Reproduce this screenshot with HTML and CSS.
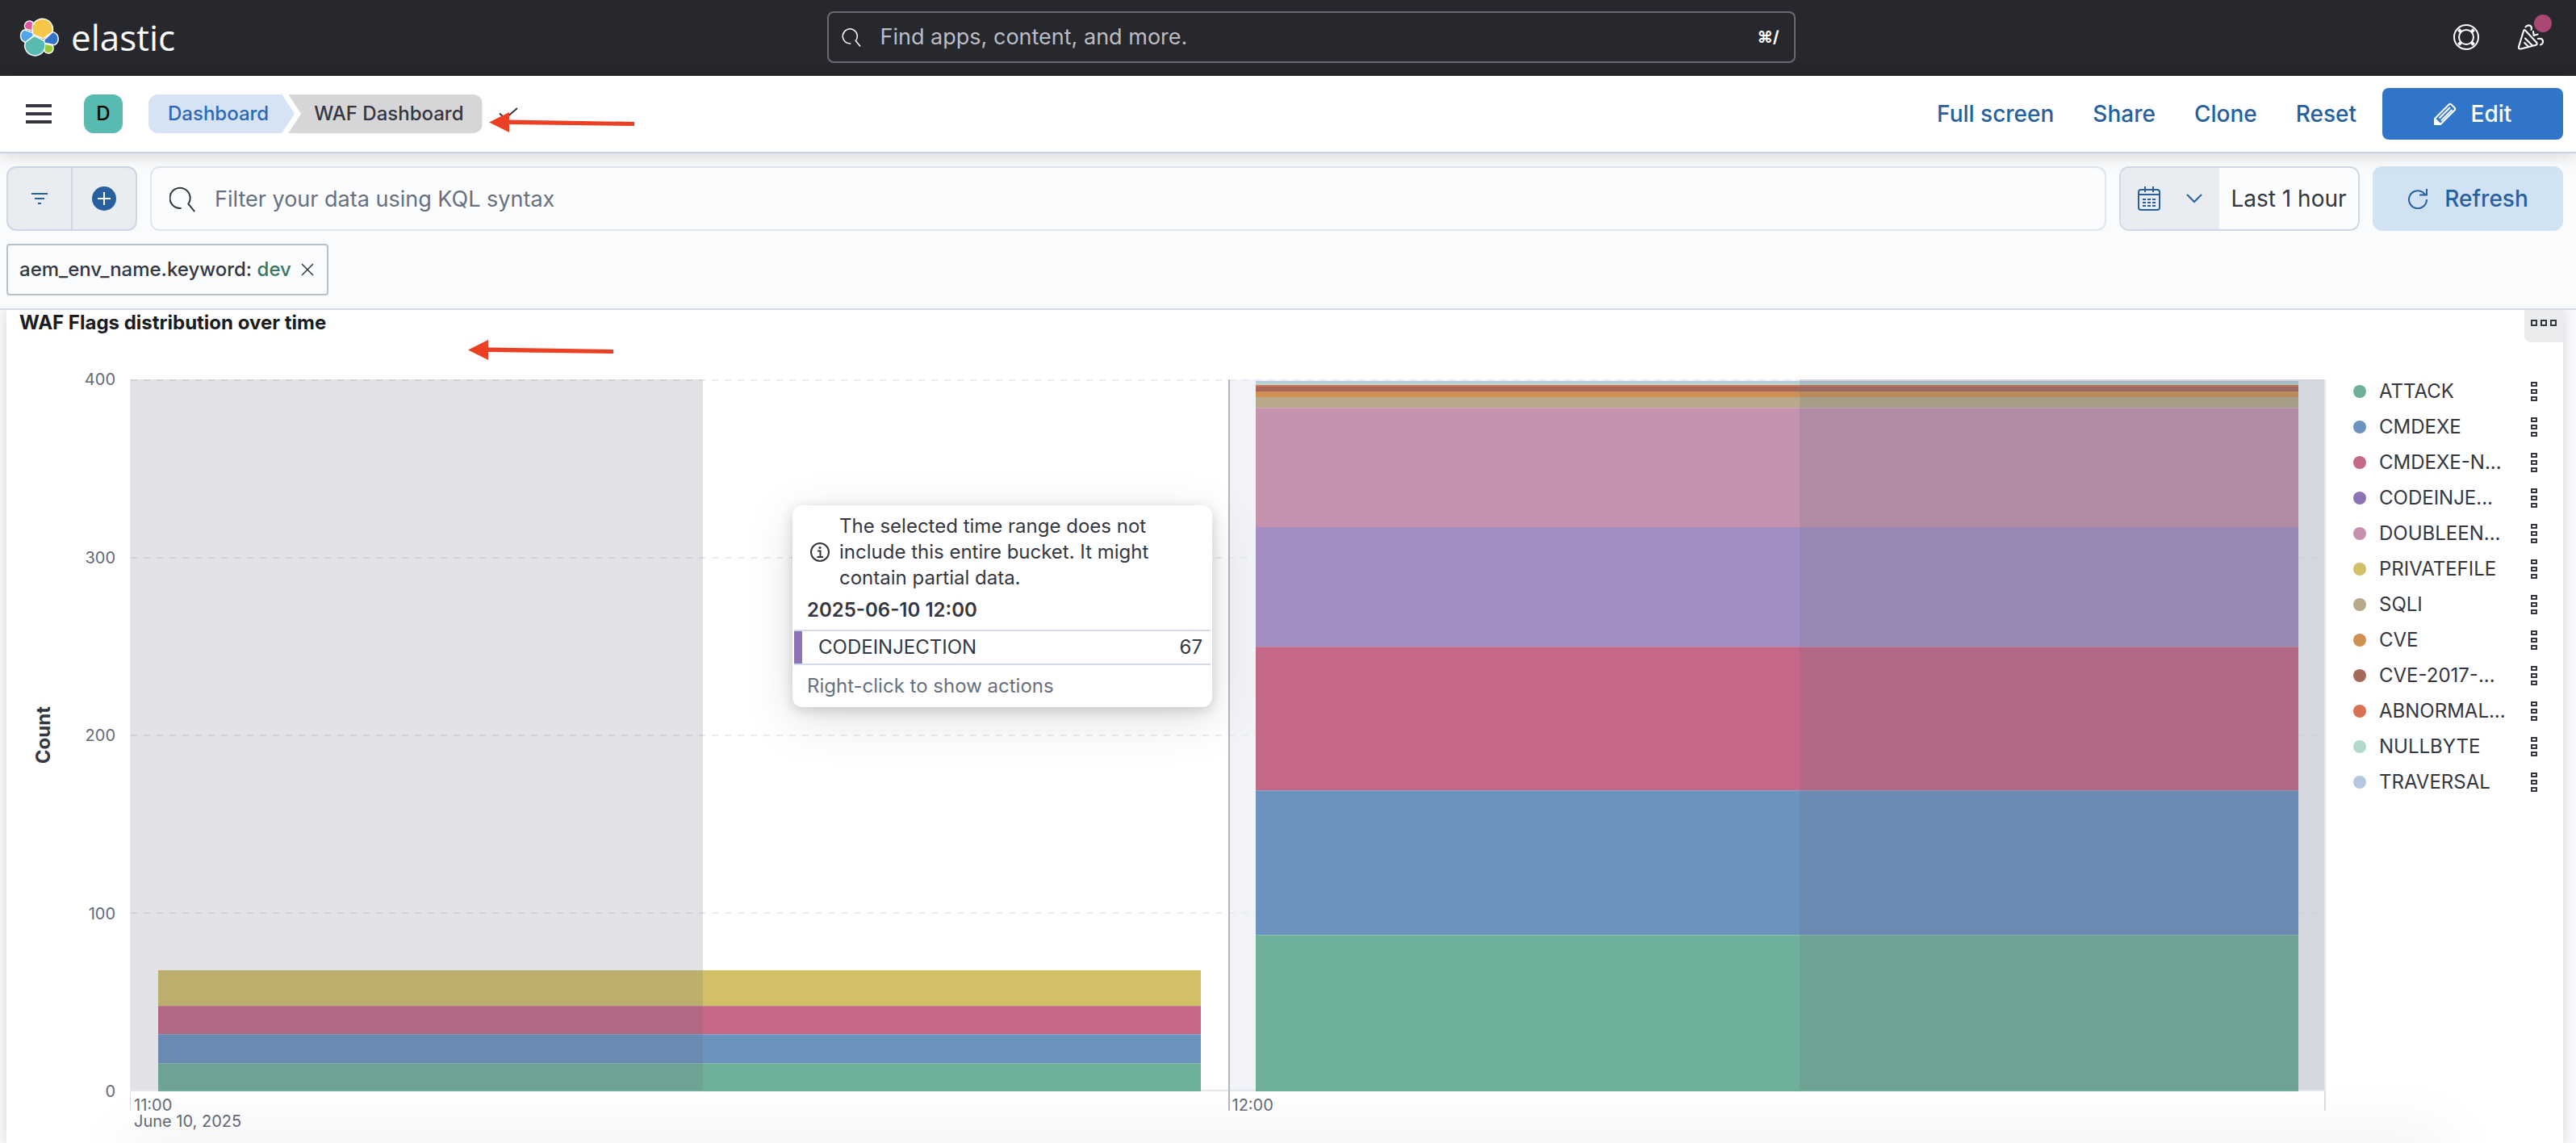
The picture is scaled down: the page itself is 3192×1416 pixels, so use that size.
FILE: index.html
```html
<!DOCTYPE html>
<html lang="en">
<head>
<meta charset="utf-8">
<title>WAF Dashboard - Elastic</title>
<link rel="stylesheet" href="styles.css">
</head>
<body>
<header class="topbar">
  <a class="brand" href="#">
    <svg class="brand-mark" viewBox="0 0 144 144" aria-hidden="true">
      <g stroke="#fff" stroke-width="9" stroke-linejoin="round">
        <path fill="#f5c748" d="M52 60 50 34A36 36 0 1 1 121 52L88 75Z"/>
        <path fill="#59bab2" d="M56 70 91 87 94 102A36 36 0 1 1 22 103L24 92Z"/>
        <path fill="#4fa6ee" d="M19 47 48 57 50 66 22 89A23 23 0 0 1 19 47Z"/>
        <path fill="#e0579c" d="M48 18 46 45 25 40A16 16 0 0 1 48 18Z"/>
        <path fill="#3275c7" d="M125 55 94 83 96 92 130 99A24 24 0 0 0 125 55Z"/>
        <path fill="#98c93d" d="M97 99 121 104A16 16 0 0 1 95 123Z"/>
      </g>
      <path fill="#f5c748" d="M52 60 50 34A36 36 0 1 1 121 52L88 75Z"/>
      <path fill="#59bab2" d="M56 70 91 87 94 102A36 36 0 1 1 22 103L24 92Z"/>
      <path fill="#4fa6ee" d="M19 47 48 57 50 66 22 89A23 23 0 0 1 19 47Z"/>
      <path fill="#e0579c" d="M48 18 46 45 25 40A16 16 0 0 1 48 18Z"/>
      <path fill="#3275c7" d="M125 55 94 83 96 92 130 99A24 24 0 0 0 125 55Z"/>
      <path fill="#98c93d" d="M97 99 121 104A16 16 0 0 1 95 123Z"/>
    </svg>
    <span class="brand-name">elastic</span>
  </a>
  <div class="site-search">
    <svg class="icon icon-sm" viewBox="0 0 16 16" aria-hidden="true"><path d="M6.500 13.200a6 6 0 1 1 5-2.200L15.400 15.600M6.500 13.300h1"/></svg>
    <input class="site-search-input" type="search" placeholder="Find apps, content, and more." aria-label="Find apps, content, and more">
    <kbd class="shortcut">⌘/</kbd>
  </div>
  <div class="topbar-actions">
    <button class="icon-btn" type="button" aria-label="Help">
      <svg class="icon" viewBox="0 0 32 32" aria-hidden="true"><g stroke-width="2"><circle cx="16" cy="16" r="15"/><circle cx="16" cy="16" r="9"/></g><g stroke-width="4"><path d="M6.500 6.500 9.500 9.500M25.500 6.500 22.500 9.500M6.500 25.500 9.500 22.500M25.500 25.500 22.500 22.500"/></g></svg>
    </button>
    <button class="icon-btn" type="button" aria-label="What's new">
      <svg class="icon" viewBox="0 0 32 32" aria-hidden="true"><g stroke-width="2.100" stroke-linejoin="round" stroke-linecap="round"><path d="M9 7.500 23 22.500Q25 25 21.500 26L4 30.500Q.5 31 1 28L7 8.500Q7.500 6.500 9 7.500ZM8.200 23l4.500 4.500M9 17.500l8.500 8.500M9.500 3.500Q11 1 14.500 1.500 18 3 16.500 7M19 9l.5 3.500M19.500 14l5-1.500M25 18q5-1 6 2.500.5 4-3 5"/></g></svg>
      <span class="news-dot"></span>
    </button>
  </div>
</header>

<nav class="navbar" aria-label="Dashboard">
  <button class="menu-btn" type="button" aria-label="Toggle primary navigation"><span></span><span></span><span></span></button>
  <button class="space-btn" type="button">D</button>
  <div class="crumbs">
    <a class="crumb crumb-first" href="#">Dashboard</a>
    <a class="crumb crumb-last" href="#" aria-current="page">WAF Dashboard</a>
    <svg class="crumb-check" viewBox="0 0 24 16" aria-hidden="true"><path d="M1 7.500 8 14 23 1"/></svg>
    <svg class="arrow arrow-crumb" viewBox="0 0 180 26" aria-hidden="true"><path d="M0 12.500 25 0V9.500L180 12V17L25 15V25Z"/></svg>
  </div>
  <div class="nav-actions">
    <a class="nav-link" href="#">Full screen</a>
    <a class="nav-link" href="#">Share</a>
    <a class="nav-link" href="#">Clone</a>
    <a class="nav-link" href="#">Reset</a>
    <button class="edit-btn" type="button">
      <svg class="icon icon-md" viewBox="0 0 28 28" aria-hidden="true"><path stroke-width="2" stroke-linejoin="round" d="M1 20 18.500 2.500Q20 1 21.500 2.500L25.500 6.500Q27 8 25.500 9.500L8 27H1ZM6.500 19.500 20 6M9 22.500 22.500 9M1 20l7 7"/><path fill="#fff" d="M1 21v6h6Z"/></svg>
      Edit
    </button>
  </div>
</nav>

<main class="page">
  <section class="querybar" aria-label="Query">
    <div class="query-row">
      <div class="filter-btns">
        <button type="button" aria-label="Saved queries"><svg class="icon icon-xs" viewBox="0 0 20 16" aria-hidden="true"><path stroke-width="2" d="M0 2H20M4 8H16M8 14H12"/></svg></button>
        <button type="button" aria-label="Add filter"><svg class="icon icon-add" viewBox="0 0 30 30" aria-hidden="true"><circle cx="15" cy="15" r="15" fill="#285f9f" stroke="none"/><path stroke="#fff" stroke-width="2" d="M15 7V23M7 15H23"/></svg></button>
      </div>
      <div class="kql">
        <svg class="icon" viewBox="0 0 16 16" aria-hidden="true"><path d="M6.500 13.500a6.300 6.300 0 1 1 5.200-2.700L15.600 15.600M6.500 13.500h.8"/></svg>
        <input class="kql-input" type="text" placeholder="Filter your data using KQL syntax" aria-label="Filter your data using KQL syntax">
      </div>
      <div class="dates">
        <button class="date-quick" type="button" aria-label="Date quick select">
          <svg class="icon icon-md" viewBox="0 0 28 30" aria-hidden="true"><g stroke-width="2"><rect x="1" y="4" width="26" height="25" rx="3"/><path d="M1 10H27M9 0V7M19 0V7"/><path stroke-dasharray="4 2" d="M6 16H22M6 20H22M6 24H22"/></g></svg>
          <svg class="icon icon-xs" viewBox="0 0 20 12" aria-hidden="true"><path stroke-width="2" d="M1 1 10 10 19 1"/></svg>
        </button>
        <button class="date-range" type="button">Last 1 hour</button>
      </div>
      <button class="refresh-btn" type="button">
        <svg class="icon icon-refresh" viewBox="0 0 26 26" aria-hidden="true"><path stroke-width="2" d="M24 14A11 11 0 1 1 19 5L22 8M24 1V8.500H15"/></svg>
        Refresh
      </button>
    </div>
    <div class="filter-row">
      <div class="filter-pill">
        <span>aem_env_name.keyword: <span class="filter-value">dev</span></span>
        <button class="filter-remove" type="button" aria-label="Remove filter"><svg class="icon icon-close" viewBox="0 0 16 16" aria-hidden="true"><path stroke-width="1.500" d="M1 1 15 15M15 1 1 15"/></svg></button>
      </div>
    </div>
  </section>

  <section class="panel" aria-labelledby="panel-title">
    <div class="panel-head">
      <h2 id="panel-title" class="panel-title">WAF Flags distribution over time</h2>
      <button class="panel-menu" type="button" aria-label="Panel options"><span></span><span></span><span></span></button>
      <svg class="arrow arrow-panel" viewBox="0 0 180 26" aria-hidden="true"><path d="M0 12.500 25 0V9.500L180 12V17L25 15V25Z"/></svg>
    </div>
    <div class="chart">
      <div class="y-title"><span>Count</span></div>
      <div class="y-axis"><span>400</span><span>300</span><span>200</span><span>100</span><span>0</span></div>
      <div class="plot">
        <div class="grid"><i></i><i></i><i></i><i></i></div>
        <div class="bucket">
          <i style="flex-grow:332"></i>
          <i class="c-private" style="flex-grow:20"></i>
          <i class="c-cmdn seam" style="flex-grow:16"></i>
          <i class="c-cmd seam" style="flex-grow:16"></i>
          <i class="c-attack seam" style="flex-grow:16"></i>
        </div>
        <div class="bucket bucket-active">
          <i style="flex-grow:1"></i>
          <i class="c-traversal" style="flex-grow:1"></i>
          <i class="c-null" style="flex-grow:1"></i>
          <i class="c-abnormal" style="flex-grow:1"></i>
          <i class="c-cve17" style="flex-grow:3"></i>
          <i class="c-cve" style="flex-grow:3"></i>
          <i class="c-sqli" style="flex-grow:6"></i>
          <i class="c-double seam" style="flex-grow:67"></i>
          <i class="c-code-dim" style="flex-grow:67"></i>
          <i class="c-cmdn seam" style="flex-grow:81"></i>
          <i class="c-cmd seam" style="flex-grow:81"></i>
          <i class="c-attack seam" style="flex-grow:88"></i>
        </div>
        <div class="partial partial-start"></div>
        <div class="partial partial-end"></div>
        <div class="tooltip" role="tooltip">
          <div class="tip-note">
            <svg class="icon icon-sm" viewBox="0 0 24 24" aria-hidden="true"><g stroke-width="2"><circle cx="12" cy="12" r="11"/><path d="M9 10.500H12.500V17.500M8.500 18H16"/></g><circle cx="12" cy="6.500" r="1.600" fill="#343741" stroke="none"/></svg>
            <p>The selected time range does not include this entire bucket. It might contain partial data.</p>
          </div>
          <div class="tip-date">2025-06-10 12:00</div>
          <div class="tip-row"><span>CODEINJECTION</span><span>67</span></div>
          <div class="tip-hint">Right-click to show actions</div>
        </div>
      </div>
      <ul class="legend">
        <li><i class="c-attack"></i><span>ATTACK</span><button type="button" aria-label="ATTACK options"><b></b><b></b><b></b></button></li>
        <li><i class="c-cmd"></i><span>CMDEXE</span><button type="button" aria-label="CMDEXE options"><b></b><b></b><b></b></button></li>
        <li><i class="c-cmdn"></i><span>CMDEXE-N...</span><button type="button" aria-label="CMDEXE-N options"><b></b><b></b><b></b></button></li>
        <li><i class="c-code"></i><span>CODEINJE...</span><button type="button" aria-label="CODEINJECTION options"><b></b><b></b><b></b></button></li>
        <li><i class="c-double"></i><span>DOUBLEEN...</span><button type="button" aria-label="DOUBLEEN options"><b></b><b></b><b></b></button></li>
        <li><i class="c-private"></i><span>PRIVATEFILE</span><button type="button" aria-label="PRIVATEFILE options"><b></b><b></b><b></b></button></li>
        <li><i class="c-sqli"></i><span>SQLI</span><button type="button" aria-label="SQLI options"><b></b><b></b><b></b></button></li>
        <li><i class="c-cve"></i><span>CVE</span><button type="button" aria-label="CVE options"><b></b><b></b><b></b></button></li>
        <li><i class="c-cve17"></i><span>CVE-2017-...</span><button type="button" aria-label="CVE-2017 options"><b></b><b></b><b></b></button></li>
        <li><i class="c-abnormal"></i><span>ABNORMAL...</span><button type="button" aria-label="ABNORMAL options"><b></b><b></b><b></b></button></li>
        <li><i class="c-null"></i><span>NULLBYTE</span><button type="button" aria-label="NULLBYTE options"><b></b><b></b><b></b></button></li>
        <li><i class="c-traversal"></i><span>TRAVERSAL</span><button type="button" aria-label="TRAVERSAL options"><b></b><b></b><b></b></button></li>
      </ul>
      <div class="x-axis">
        <div class="x-tick">11:00<br>June 10, 2025</div>
        <div class="x-tick x-tick-active">12:00</div>
      </div>
    </div>
  </section>
</main>
<div class="page-fade"></div>
</body>
</html>
```
FILE: styles.css
```css
* { box-sizing: border-box; }

body {
  margin: 0;
  min-height: 100vh;
  display: flex;
  flex-direction: column;
  position: relative;
  overflow: hidden;
  background: #fafbfd;
  color: #343741;
  font-family: Inter, "Liberation Sans", sans-serif;
  font-size: 24px;
  line-height: 32px;
}

button, input {
  font: inherit;
  color: inherit;
  border: 0;
  margin: 0;
  padding: 0;
  background: none;
}

button { display: flex; align-items: center; justify-content: center; }
input { outline: 0; }
a { text-decoration: none; }

.icon {
  width: 32px;
  height: 32px;
  flex: none;
  fill: none;
  stroke: currentColor;
  stroke-width: 1;
}
.icon-md { width: 28px; height: 30px; }
.icon-refresh { width: 26px; height: 26px; }
.icon-sm { width: 24px; height: 24px; }
.icon-xs { width: 20px; height: 16px; }
.icon-add { width: 30px; height: 30px; }
.icon-close { width: 16px; height: 16px; }

/* Top bar */
.topbar {
  display: flex;
  align-items: center;
  justify-content: space-between;
  height: 94px;
  padding: 0 32px 2px 24px;
  background: #27282e;
  color: #fff;
}
.brand { display: flex; align-items: center; gap: 16px; color: #fff; }
.brand-mark { width: 48px; height: 48px; overflow: visible; }
.brand-name { font: 400 44px/48px "Open Sans", "Noto Sans", sans-serif; }
.site-search {
  display: flex;
  align-items: center;
  gap: 24px;
  width: 1200px;
  height: 64px;
  padding: 0 18px 0 16px;
  border: 2px solid #6a6b72;
  border-radius: 8px;
}
.site-search-input { flex: 1; font-size: 27px; }
.site-search-input::placeholder { color: #bcbdc2; opacity: 1; }
.shortcut { font: 700 20px/24px Inter, "DejaVu Sans", sans-serif; }
.topbar-actions { display: flex; gap: 32px; }
.icon-btn { position: relative; width: 48px; height: 48px; }
.news-dot {
  position: absolute;
  top: -4px;
  right: -2px;
  width: 22px;
  height: 22px;
  border-radius: 50%;
  background: #ab4775;
}

/* Navigation bar */
.navbar {
  position: relative;
  z-index: 1;
  display: flex;
  align-items: center;
  height: 96px;
  padding: 0 16px 0 32px;
  background: #fff;
  border-bottom: 2px solid #ccd2dd;
  box-shadow: 0 2px 20px rgba(0, 0, 0, .16);
}
.menu-btn { flex-direction: column; gap: 6px; width: 32px; }
.menu-btn span { width: 32px; height: 4px; background: #343741; }
.space-btn {
  width: 48px;
  height: 48px;
  margin: 0 32px 0 40px;
  border-radius: 12px;
  background: #59bab2;
  color: #000;
  font-weight: 500;
}
.crumbs { display: flex; align-items: center; position: relative; font-weight: 500; }
.crumb { height: 48px; line-height: 48px; }
.crumb-first {
  padding: 0 32px 0 24px;
  border-radius: 12px 0 0 12px;
  background: #d6e3f5;
  color: #2b68b6;
  clip-path: polygon(0 0, calc(100% - 16px) 0, 100% 50%, calc(100% - 16px) 100%, 0 100%);
}
.crumb-last {
  margin-left: -8px;
  padding: 0 23px 0 32px;
  border-radius: 0 12px 12px 0;
  background: #d6d6d9;
  color: #343741;
  clip-path: polygon(0 0, 100% 0, 100% 100%, 0 100%, 16px 50%);
}
.crumb-check { width: 24px; height: 16px; margin-left: 20px; fill: none; stroke: #343741; stroke-width: 2; }
.arrow { position: absolute; width: 180px; height: 26px; fill: #ec4025; }
.arrow-crumb { right: -144px; top: 22px; }
.nav-actions { display: flex; align-items: center; margin-left: auto; font-size: 28px; font-weight: 500; }
.nav-link { padding: 0 24px; color: #285f9f; }
.edit-btn {
  gap: 18px;
  width: 224px;
  height: 64px;
  margin-left: 8px;
  border-radius: 8px;
  background: #3175c8;
  color: #fff;
}

/* Query bar */
.page { flex: 1; display: flex; flex-direction: column; }
.querybar { padding: 16px 16px 16px 8px; border-bottom: 2px solid #d3dae6; font-size: 28px; }
.query-row { display: flex; gap: 16px; height: 80px; }
.filter-btns {
  display: flex;
  width: 162px;
  border: 2px solid #cfd6e4;
  border-radius: 12px;
  background: #e9edf2;
  color: #285f9f;
}
.filter-btns button { flex: 1; }
.filter-btns button + button { border-left: 2px solid #cfd6e4; }
.kql {
  flex: 1;
  display: flex;
  align-items: center;
  gap: 24px;
  padding: 2px 22px 0;
  border: 2px solid #e2e5ee;
  border-radius: 12px;
  background: #fbfcfe;
}
.kql-input { flex: 1; font-size: 27px; }
.kql-input::placeholder { color: #69707d; opacity: 1; }
.dates {
  display: flex;
  width: 298px;
  border: 2px solid #d2d8e5;
  border-radius: 12px;
  overflow: hidden;
  background: #fbfcfe;
}
.date-quick { width: 122px; gap: 32px; background: #e9edf2; color: #285f9f; }
.date-range { flex: 1; white-space: nowrap; }
.refresh-btn {
  gap: 20px;
  width: 236px;
  border-radius: 12px;
  background: #d1e2f2;
  color: #285f9f;
  font-weight: 500;
}
.filter-row { display: flex; padding-top: 16px; font-size: 24px; font-weight: 500; }
.filter-pill {
  display: flex;
  align-items: center;
  gap: 12px;
  height: 64px;
  padding: 0 16px 0 14px;
  border: 2px solid #b8c0cc;
  border-radius: 4px;
  background: #fbfcfe;
}
.filter-value { color: #387765; }

/* Panel */
.panel {
  flex: 1;
  display: flex;
  flex-direction: column;
  margin: 0 16px 0 8px;
  background: #fff;
  box-shadow: 0 0 16px rgba(60, 70, 90, .2);
  clip-path: inset(0 -16px 0 -8px);
}
.panel-head { position: relative; display: flex; justify-content: space-between; height: 86px; padding-left: 16px; }
.panel-title { margin: 0; font-size: 24px; font-weight: 700; color: #1a1c21; }
.panel-menu {
  gap: 4px;
  width: 48px;
  height: 40px;
  padding-bottom: 8px;
  border-radius: 0 0 0 8px;
  background: #ebecee;
}
.panel-menu span { width: 8px; height: 8px; border: 2px solid #343741; }
.arrow-panel { left: 572px; top: 37px; }

/* Chart */
.chart {
  flex: 1;
  display: grid;
  grid-template-columns: 92px 61px minmax(0, 1fr) 294px;
  grid-template-rows: minmax(800px, 1fr) 64px;
}
.y-title { display: flex; align-items: center; justify-content: center; font-weight: 700; }
.y-title span { writing-mode: vertical-rl; transform: rotate(180deg); }
.y-axis {
  display: flex;
  flex-direction: column;
  justify-content: space-between;
  margin: -16px 0;
  padding-right: 18px;
  text-align: right;
  font-size: 20px;
  color: #646a77;
}
.plot { position: relative; display: flex; border: 1px solid #e6e7ec; border-width: 0 2px 2px 1px; }
.grid { position: absolute; inset: 0; display: flex; flex-direction: column; }
.grid i { flex: 1; background: repeating-linear-gradient(90deg, #ebecf1 0 8px, transparent 8px 16px) 0 0 / 100% 2px no-repeat; }
.bucket { position: relative; flex: 1; display: flex; flex-direction: column; padding: 0 34px; margin-bottom: -2px; }
.bucket i { flex: 0 0 0; min-height: 0; }
.bucket-active { background: rgba(228, 231, 242, .5); border-left: 2px solid #b5b6b9; padding: 0 32px; }
.seam { box-shadow: inset 0 1px rgba(255, 255, 255, .2); }
.partial { position: absolute; top: 0; bottom: 0; background: rgba(105, 112, 125, .2); }
.partial-start { left: 0; width: 26.1%; }
.partial-end { right: 0; width: 23.9%; }

.c-attack { background: #6fb09a; }
.c-cmd { background: #6c92be; }
.c-cmdn { background: #c56786; }
.c-code { background: #8d72b4; }
.c-code-dim { background: #a28ec3; }
.c-double { background: #c492ae; }
.c-private { background: #d1c067; }
.c-sqli { background: #b8a98c; }
.c-cve { background: #d09053; }
.c-cve17 { background: #a4695b; }
.c-abnormal { background: #d96f53; }
.c-null { background: #b3d8cc; }
.c-traversal { background: #b5c8e0; }

.tooltip {
  position: absolute;
  right: 1378px;
  top: 156px;
  width: 520px;
  padding: 10px 2px;
  border-radius: 12px;
  background: #fff;
  box-shadow: 0 4px 16px rgba(0, 0, 0, .16), 0 16px 60px rgba(0, 0, 0, .12);
}
.tip-note { display: flex; align-items: center; gap: 12px; padding: 0 24px 0 20px; }
.tip-note p { margin: 0; }
.tip-date { padding: 8px 16px; font-weight: 600; }
.tip-row {
  display: flex;
  justify-content: space-between;
  padding: 4px 10px 4px 20px;
  border: solid #d3dae6;
  border-width: 2px 0;
  box-shadow: inset 10px 0 #8d72b4;
}
.tip-row span:first-child { padding-left: 10px; }
.tip-hint { padding: 10px 16px 0; color: #69707d; }

.legend { display: flex; flex-direction: column; margin: -7px 0 0; padding: 0 28px 0 34px; list-style: none; }
.legend li { display: flex; align-items: center; height: 44px; }
.legend i { width: 16px; height: 16px; margin-right: 16px; border-radius: 50%; }
.legend span { flex: 1; }
.legend button { flex-direction: column; gap: 3px; width: 16px; }
.legend b { width: 8px; height: 6px; border: 2px solid #343741; }

.x-axis { grid-column: 3; display: flex; font-size: 20px; line-height: 20px; color: #646a77; }
.x-tick {
  flex: 1;
  padding: 7px 0 0 5px;
  background: linear-gradient(#dddee2, #dddee2) 0 0 / 1px 24px no-repeat;
}
.x-tick-active {
  background:
    linear-gradient(#b5b6b9, #b5b6b9) 0 0 / 2px 24px no-repeat,
    linear-gradient(#dddee2, #dddee2) 100% 0 / 2px 24px no-repeat;
}
.page-fade {
  position: absolute;
  left: 160px;
  right: 160px;
  bottom: -24px;
  height: 20px;
  box-shadow: 0 0 80px rgba(0, 0, 0, .16);
  pointer-events: none;
}
```
